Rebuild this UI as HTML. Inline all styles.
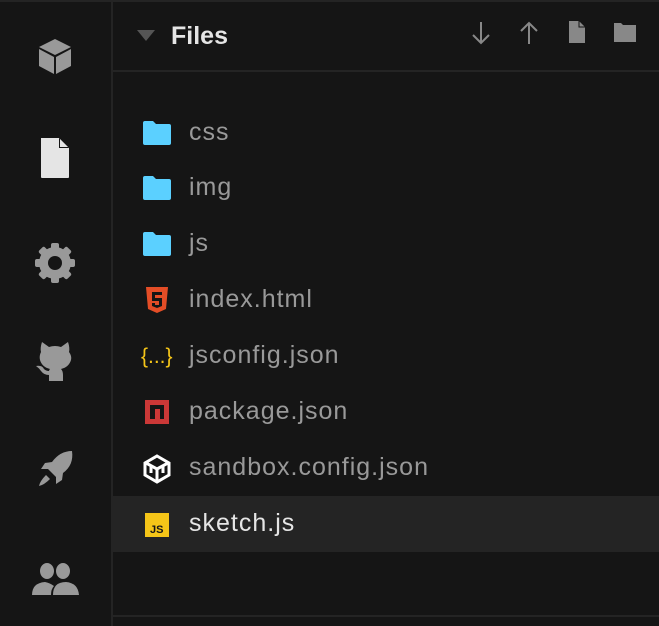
<!DOCTYPE html>
<html><head><style>
*{margin:0;padding:0;box-sizing:border-box}
body{width:659px;height:626px;background:#151515;position:relative;overflow:hidden;font-family:"Liberation Sans",sans-serif}
.top{position:absolute;left:0;top:0;width:659px;height:2px;background:#242424}
.side{position:absolute;left:111px;top:0;width:2px;height:626px;background:#242424}
.hdr{position:absolute;left:113px;top:70px;width:546px;height:2px;background:#242424}
.bot{position:absolute;left:113px;top:615px;width:546px;height:2px;background:#242424}
.si{position:absolute;left:30px;width:50px;height:50px}
.row{position:absolute;left:113px;width:546px;height:56px}
.row span{position:absolute;left:76px;top:13px;font-size:25px;letter-spacing:1px;color:#999}
.row svg{position:absolute;left:29px;top:14px}
.sel{background:#242424}
.sel span{color:#e5e5e5}
</style></head><body>
<div class="top"></div><div class="side"></div><div class="hdr"></div><div class="bot"></div>

<svg class="si" style="top:30px" viewBox="0 0 50 50"><path d="M25 9 L41 17 L25 25 L9 17Z" fill="#999"/><path d="M9 19 L24 27 L24 44 L9 36Z" fill="#999"/><path d="M41 19 L26 27 L26 44 L41 36Z" fill="#999"/></svg>
<svg class="si" style="top:133px" viewBox="0 0 50 50"><path d="M11 5 H29 L39 15 V44 Q39 45 38 45 H12 Q11 45 11 44Z" fill="#e5e5e5"/><path d="M29 5 V15 H39Z" fill="#151515"/><path d="M30 6 L38 14 H30Z" fill="#e5e5e5"/></svg>
<svg class="si" style="top:238px" viewBox="0 0 50 50"><g fill="#999"><circle cx="25" cy="25" r="16"/><rect x="21" y="5" width="8" height="40" rx="2"/><rect x="21" y="5" width="8" height="40" rx="2" transform="rotate(45 25 25)"/><rect x="21" y="5" width="8" height="40" rx="2" transform="rotate(90 25 25)"/><rect x="21" y="5" width="8" height="40" rx="2" transform="rotate(135 25 25)"/></g><circle cx="25" cy="25" r="7" fill="#151515"/></svg>
<svg class="si" style="top:335px" viewBox="0 0 50 50"><path d="M12 7 L19 12 Q25 10 31 12 L38 7 Q40 13 39 17 Q42 21 41 25 Q39 32 31 34 Q33 36 33 40 V46 H19 V40 Q14 40 11 36 Q9 33 6 31 Q12 30 14 34 Q16 36 19 36 Q19 35 20 34 Q12 32 10 25 Q9 21 11 17 Q10 13 12 7Z" fill="#999"/></svg>
<svg class="si" style="top:445px" viewBox="0 0 50 50"><path d="M42 6 Q30 6 22 17 L15 18 L11 24 L18 24 L26 32 L26 39 L32 35 L33 28 Q44 20 42 6Z" fill="#999"/><path d="M16 30 L20 34 Q14 40 9 41 Q10 36 16 30Z" fill="#999"/></svg>
<svg class="si" style="top:553px" viewBox="0 0 50 50"><g fill="#999"><ellipse cx="17" cy="18" rx="7" ry="8"/><ellipse cx="33" cy="18" rx="7" ry="8"/><path d="M2 42 Q2 30 15 29 Q20 30 24 33 Q21 36 21 42Z"/><path d="M23 42 Q23 29 36 29 Q48 30 49 42Z"/></g></svg>

<svg style="position:absolute;left:137px;top:30px" width="18" height="12"><path d="M0 0 H18 L9 11Z" fill="#555"/></svg>
<div style="position:absolute;left:171px;top:22px;font-size:25px;font-weight:bold;color:#e5e5e5">Files</div>
<svg style="position:absolute;left:470px;top:20px" width="170" height="26" viewBox="0 0 170 26">
<g stroke="#888" stroke-width="2" fill="none"><path d="M11 2 V23 M3 15 L11 23 L19 15"/><path d="M59 3 V24 M51 11 L59 3 L67 11"/></g>
<path d="M99 1 H109 L115 7 V23 H99Z" fill="#888"/><path d="M109 1 V7 H115" stroke="#151515" fill="none"/>
<path d="M144 3 H151 L153 5 H166 V22 H144Z" fill="#888"/></svg>

<div class="row" style="top:105px"><svg width="30" height="28"><path d="M1 4 Q1 2 3 2 H11 L14 5 H27 Q29 5 29 7 V24 Q29 26 27 26 H3 Q1 26 1 24Z" fill="#5bd0ff"/></svg><span>css</span></div>
<div class="row" style="top:160px"><svg width="30" height="28"><path d="M1 4 Q1 2 3 2 H11 L14 5 H27 Q29 5 29 7 V24 Q29 26 27 26 H3 Q1 26 1 24Z" fill="#5bd0ff"/></svg><span>img</span></div>
<div class="row" style="top:216px"><svg width="30" height="28"><path d="M1 4 Q1 2 3 2 H11 L14 5 H27 Q29 5 29 7 V24 Q29 26 27 26 H3 Q1 26 1 24Z" fill="#5bd0ff"/></svg><span>js</span></div>
<div class="row" style="top:272px"><svg width="30" height="28" viewBox="0 0 30 28"><path d="M4 1 H26 L24 23 L15 27 L6 23Z" fill="#e44d26"/><path d="M10 6 H20 V9 H13 V12 H20 V20 L15 22 L10 20 V17 H13 V19 L17 19 V15 H10Z" fill="#151515"/></svg><span>index.html</span></div>
<div class="row" style="top:328px"><svg width="34" height="28" style="left:28px"><text x="0" y="21" font-size="21" fill="#f5c518" font-family="Liberation Sans">{...}</text></svg><span>jsconfig.json</span></div>
<div class="row" style="top:384px"><svg width="30" height="28"><rect x="3" y="2" width="24" height="24" fill="#cb3837"/><path d="M8 7 H22 V21 H18 V11 H13 V21 H8Z" fill="#151515"/></svg><span>package.json</span></div>
<div class="row" style="top:440px"><svg width="30" height="30" viewBox="0 0 30 30"><path d="M15 2 L27 9 V21 L15 28 L3 21 V9Z" fill="none" stroke="#fff" stroke-width="3"/><path d="M4 9 L15 15 L26 9 M15 15 V27 M9 12 V19 M21 12 V19" stroke="#fff" stroke-width="3" fill="none"/></svg><span>sandbox.config.json</span></div>
<div class="row sel" style="top:496px"><svg width="30" height="28"><rect x="3" y="3" width="24" height="24" fill="#f5c518"/><text x="8" y="23" font-size="11" font-weight="bold" fill="#151515" font-family="Liberation Sans">JS</text></svg><span>sketch.js</span></div>
</body></html>
